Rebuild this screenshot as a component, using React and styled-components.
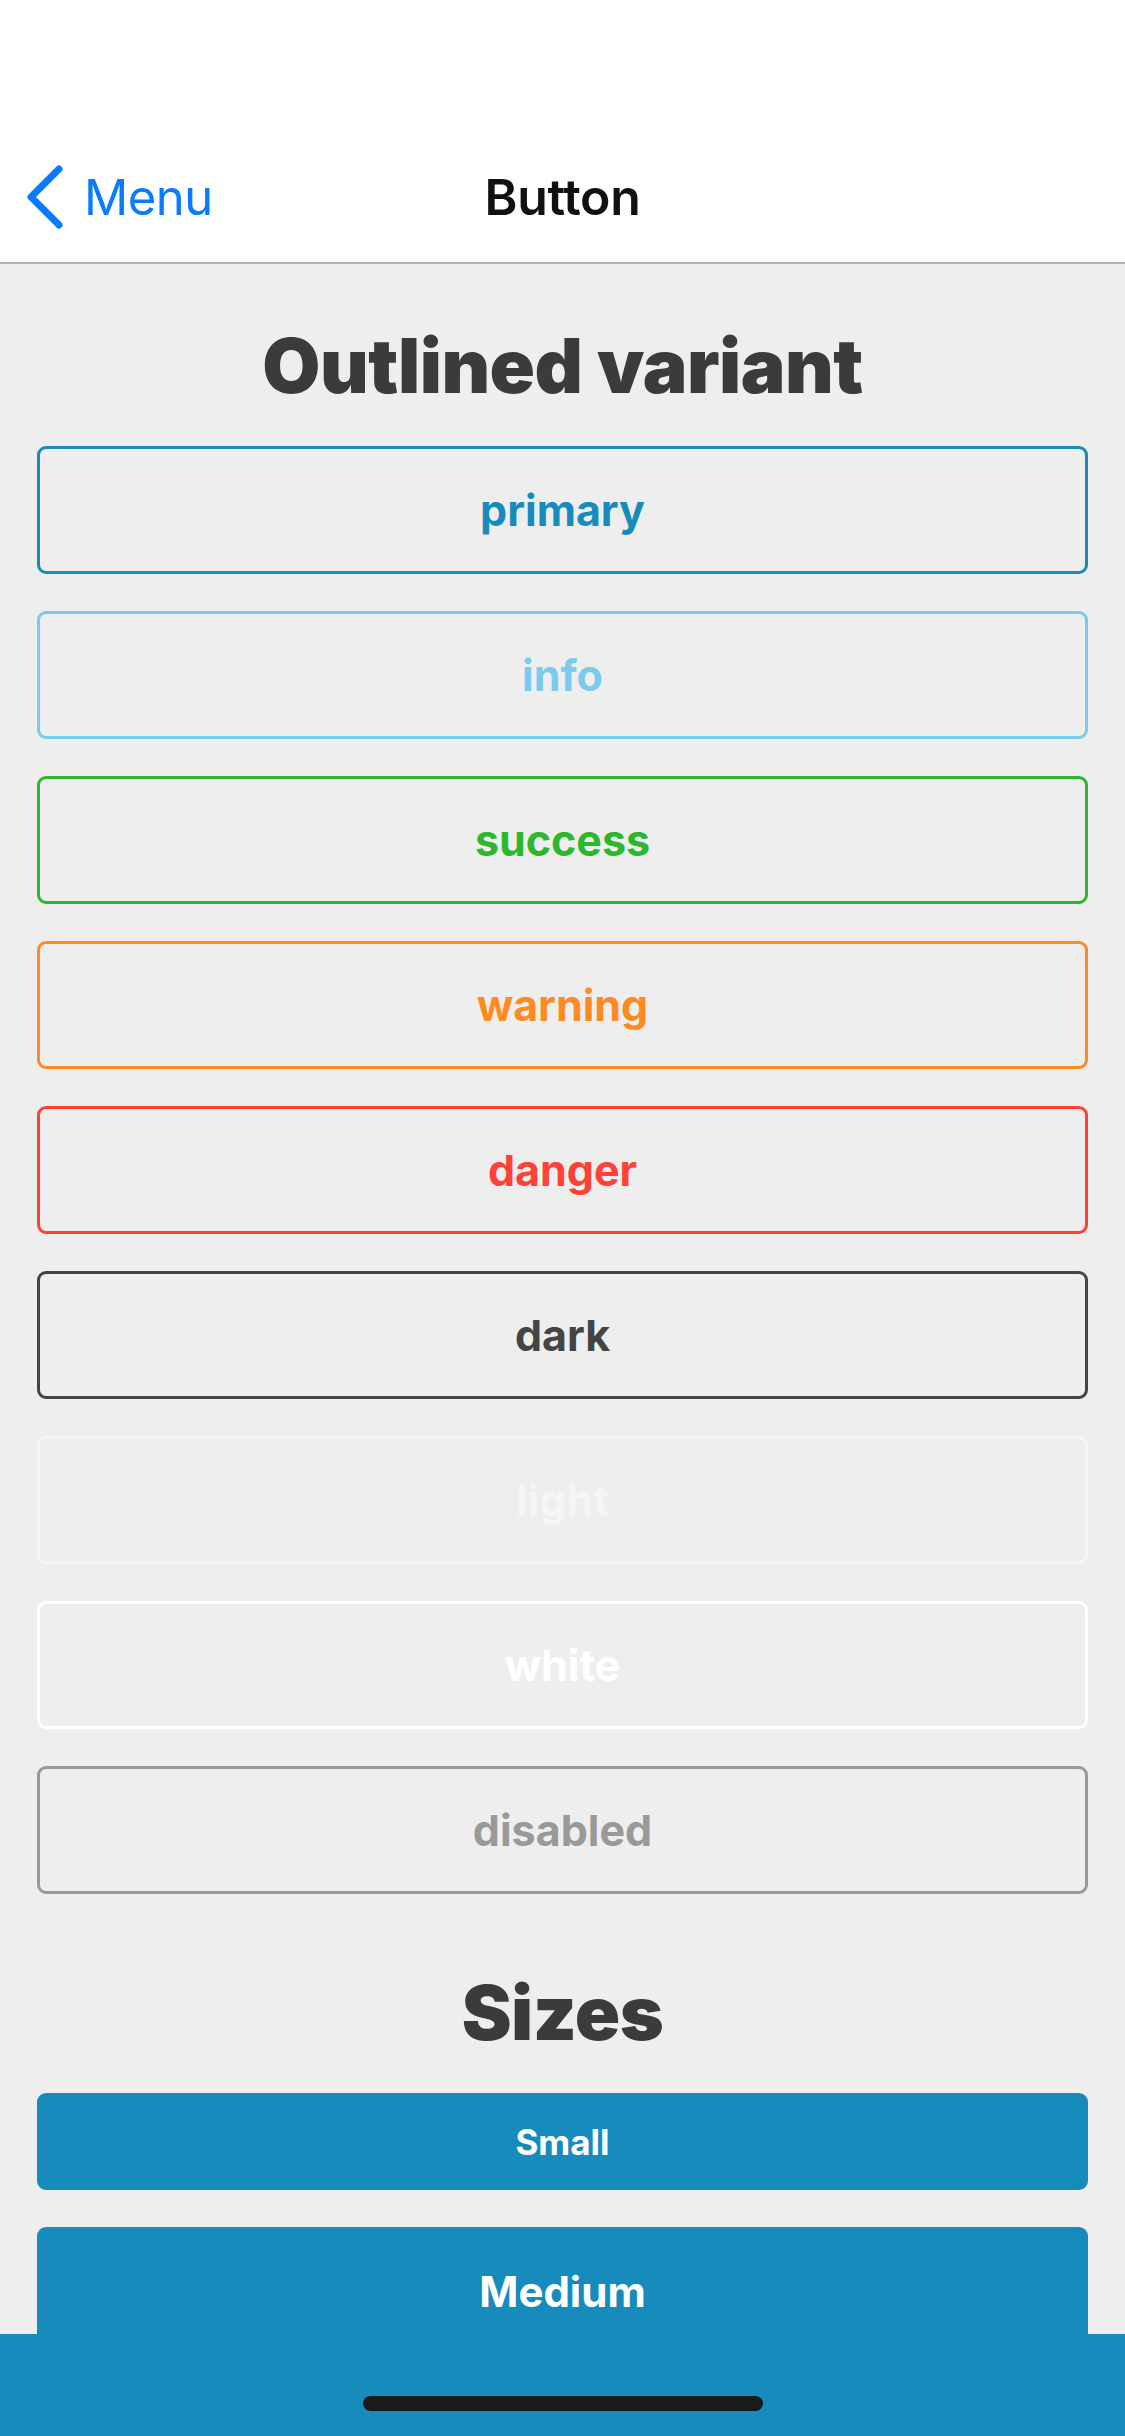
import React from 'react'
import styled, { createGlobalStyle } from 'styled-components'

const GlobalStyle = createGlobalStyle`
  html, body {
    margin: 0;
    padding: 0;
    background: #eeeeee;
  }
  * {
    box-sizing: border-box;
  }
`

const COLORS = {
  primary: '#178cbc',
  info: '#7acbee',
  success: '#2db72d',
  warning: '#ff8a22',
  danger: '#ff4136',
  dark: '#444444',
  light: '#f5f5f5',
  white: '#ffffff',
  disabled: '#999999',
}

const Screen = styled.div`
  position: relative;
  width: 1125px;
  height: 2436px;
  overflow: hidden;
  background: #eeeeee;
  font-family: Inter, "Liberation Sans", sans-serif;
`

const Header = styled.header`
  background: #ffffff;
  height: 264px;
  padding-top: 132px;
  border-bottom: 2px solid #b0b0b0;
`

const NavRow = styled.div`
  position: relative;
  height: 130px;
  display: flex;
  align-items: center;
  justify-content: center;
`

const BackButton = styled.div`
  position: absolute;
  left: 24px;
  top: 0;
  bottom: 0;
  display: flex;
  align-items: center;
  gap: 18px;
  color: #0a7aff;
  font-size: 49px;
  font-weight: 400;
  letter-spacing: -0.5px;
  svg {
    width: 42px;
    height: 64px;
  }
`

const NavTitle = styled.h1`
  margin: 0;
  font-size: 50px;
  font-weight: 600;
  color: #111111;
  letter-spacing: -0.3px;
`

const Content = styled.main`
  padding: 0 37px;
  display: flex;
  flex-direction: column;
`

const SectionTitle = styled.h2`
  margin: ${(p) => p.$top}px 0 36px;
  text-align: center;
  font-size: 75px;
  line-height: 89px;
  font-weight: 900;
  color: #3b3b3b;
  letter-spacing: -0.5px;
`

const List = styled.div`
  display: flex;
  flex-direction: column;
  gap: 37px;
`

const OutlineButton = styled.button`
  height: 128px;
  width: 100%;
  display: flex;
  align-items: center;
  justify-content: center;
  background: transparent;
  border: 3px solid ${(p) => p.$color};
  border-radius: 9px;
  color: ${(p) => p.$color};
  font-family: inherit;
  font-size: 43px;
  font-weight: 700;
  padding: 0;
`

const SolidButton = styled.button`
  height: ${(p) => p.$height}px;
  width: 100%;
  display: flex;
  align-items: center;
  justify-content: center;
  background: #178cbc;
  border: none;
  border-radius: 9px;
  color: #ffffff;
  font-family: inherit;
  font-size: ${(p) => p.$size}px;
  font-weight: 700;
  padding: 0;
`

const BottomBar = styled.div`
  position: absolute;
  left: 0;
  right: 0;
  bottom: 0;
  height: 102px;
  background: #178cbc;
  display: flex;
  justify-content: center;
`

const HomeIndicator = styled.div`
  margin-top: 62px;
  width: 400px;
  height: 15px;
  border-radius: 8px;
  background: #1a1a1a;
`

const variants = ['primary', 'info', 'success', 'warning', 'danger', 'dark', 'light', 'white', 'disabled']

const App = () => {
  return (
    <Screen>
      <GlobalStyle />
      <Header>
        <NavRow>
          <BackButton>
            <svg viewBox="0 0 42 64" fill="none">
              <path d="M35 4 L7 32 L35 60" stroke="#0a7aff" strokeWidth="7" strokeLinecap="round" strokeLinejoin="round" />
            </svg>
            <span>Menu</span>
          </BackButton>
          <NavTitle>Button</NavTitle>
        </NavRow>
      </Header>
      <Content>
        <SectionTitle $top={57}>Outlined variant</SectionTitle>
        <List>
          {variants.map((v) => (
            <OutlineButton key={v} $color={COLORS[v]}>{v}</OutlineButton>
          ))}
        </List>
        <SectionTitle $top={74}>Sizes</SectionTitle>
        <List>
          <SolidButton $height={97} $size={35}>Small</SolidButton>
          <SolidButton $height={128} $size={42}>Medium</SolidButton>
        </List>
      </Content>
      <BottomBar>
        <HomeIndicator />
      </BottomBar>
    </Screen>
  )
}

export default App
